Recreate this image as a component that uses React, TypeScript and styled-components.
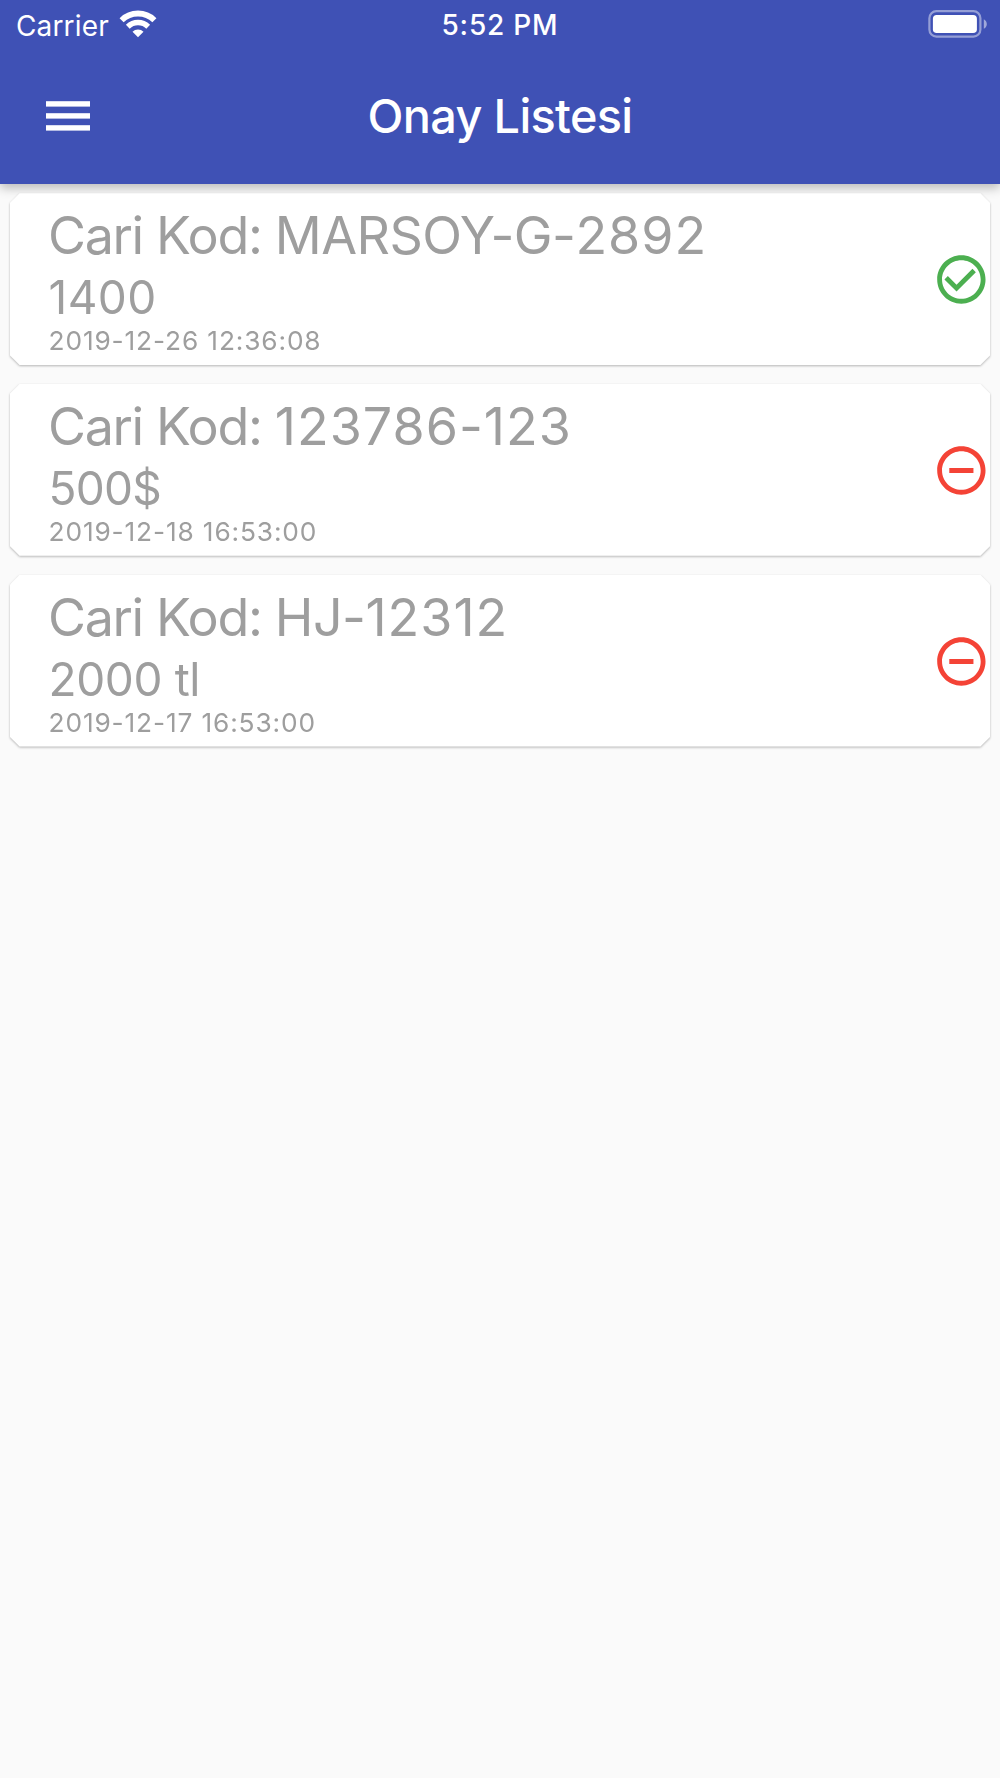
import React from 'react';
import styled, { createGlobalStyle } from 'styled-components';

const GlobalStyle = createGlobalStyle`
  *, *::before, *::after { box-sizing: border-box; }
  body {
    margin: 0;
    background: #fafafa;
    font-family: Inter, Roboto, 'Liberation Sans', sans-serif;
    -webkit-font-smoothing: antialiased;
  }
`;

const Screen = styled.div`
  width: 1000px;
  min-height: 1778px;
  background: #fafafa;
`;

const Header = styled.header`
  height: 183.7px;
  background: #3f51b5;
  color: #fff;
  box-shadow: 0 4px 10px rgba(0, 0, 0, 0.26);
`;

const StatusBar = styled.div`
  display: grid;
  grid-template-columns: 1fr auto 1fr;
  align-items: center;
  height: 50px;
  padding: 0 12px;
`;

const Network = styled.div`
  display: flex;
  align-items: center;
  gap: 10px;
  padding-left: 4px;

  svg {
    margin-bottom: 2px;
  }
`;

const Carrier = styled.span`
  padding-top: 1px;
  font-size: 28px;
  line-height: 32px;
  letter-spacing: 0.15px;
`;

const Clock = styled.span`
  font-size: 28px;
  font-weight: 500;
  line-height: 32px;
  letter-spacing: 0.8px;
  white-space: nowrap;
`;

const BatterySlot = styled.div`
  display: flex;
  justify-content: flex-end;
  padding-bottom: 2px;
`;

const Toolbar = styled.div`
  display: grid;
  grid-template-columns: 1fr auto 1fr;
  align-items: center;
  height: 132px;
  padding: 0 46px;
`;

const MenuButton = styled.button`
  display: flex;
  width: 44px;
  padding: 0;
  border: 0;
  background: none;
  color: inherit;
`;

const Title = styled.h1`
  margin: 0;
  font-size: 46.8px;
  font-weight: 500;
  line-height: 56px;
  letter-spacing: -0.65px;
  white-space: nowrap;
`;

const List = styled.main`
  display: flex;
  flex-direction: column;
  gap: 19px;
  padding: 9.5px 9.6px;
`;

const CardShadow = styled.div`
  filter: drop-shadow(0 1.5px 1.3px rgba(0, 0, 0, 0.28));
`;

const Card = styled.article`
  display: flex;
  justify-content: space-between;
  align-items: center;
  height: 171.8px;
  padding-left: 39px;
  background: #fff;
  color: #9e9e9e;
  clip-path: polygon(
    10px 0, calc(100% - 10px) 0, 100% 10px, 100% calc(100% - 10px),
    calc(100% - 10px) 100%, 10px 100%, 0 calc(100% - 10px), 0 10px
  );
`;

const Details = styled.div`
  display: flex;
  flex-direction: column;
  white-space: nowrap;
`;

const Code = styled.div`
  margin-left: -0.6px;
  font-size: 52px;
  line-height: 63px;
  letter-spacing: -1.35px;
`;

const Letters = styled.span`
  letter-spacing: -0.55px;
`;

const Digits = styled.span`
  letter-spacing: 1px;
`;

const Amount = styled.div<{ $tracking: number }>`
  font-size: 46px;
  line-height: 60px;
  letter-spacing: ${(p) => p.$tracking}px;
`;

const Stamp = styled.div`
  margin-top: 1px;
  font-size: 26.3px;
  line-height: 26px;
  letter-spacing: 0.85px;
`;

const StateIcon = styled.svg<{ $approved: boolean }>`
  width: 58px;
  height: 58px;
  flex: none;
  fill: ${(p) => (p.$approved ? '#4caf50' : '#f44336')};
`;

const RING =
  'M12 2C6.48 2 2 6.48 2 12s4.48 10 10 10 10-4.48 10-10S17.52 2 12 2zm0 18c-4.41 0-8-3.59-8-8s3.59-8 8-8 8 3.59 8 8-3.59 8-8 8z';
const CHECK = 'M16.59 7.58 10 14.17l-3.59-3.58L5 12l5 5 8-8z';
const MINUS = 'M7 11v2h10v-2z';

const WifiIcon = () => (
  <svg width="38" height="28" viewBox="0 0 38 28" fill="none" stroke="#fff">
    <path d="M2.6 10.2a23.4 23.4 0 0 1 32.8 0" strokeWidth="5.8" />
    <path d="M8.8 16.7a14.6 14.6 0 0 1 20.4 0" strokeWidth="5.4" />
    <path d="M13.5 21.7a7.8 7.8 0 0 1 11 0L19 27.2z" fill="#fff" stroke="none" />
  </svg>
);

const BatteryIcon = () => (
  <svg width="60" height="28" viewBox="0 0 60 28">
    <rect x="1.4" y="1.2" width="51" height="25.4" rx="7" fill="none" stroke="#fff" strokeOpacity="0.45" strokeWidth="2.2" />
    <rect x="4.9" y="4.9" width="44" height="18.2" rx="3.8" fill="#fff" />
    <path d="M55.8 9.2c4 2 4 7.6 0 9.6z" fill="#fff" fillOpacity="0.5" />
  </svg>
);

const MenuIcon = () => (
  <svg width="44" height="30" viewBox="0 0 44 30" fill="#fff">
    <rect y="0.2" width="44" height="5.4" />
    <rect y="12.2" width="44" height="5.4" />
    <rect y="24.2" width="44" height="5.4" />
  </svg>
);

const approvals = [
  { letters: 'MARSOY-G-', digits: '2892', amount: '1400', tracking: 0.4, date: '2019-12-26 12:36:08', approved: true },
  { letters: '', digits: '123786-123', amount: '500$', tracking: -0.8, date: '2019-12-18 16:53:00', approved: false },
  { letters: 'HJ-', digits: '12312', amount: '2000 tl', tracking: -0.4, date: '2019-12-17 16:53:00', approved: false },
];

export default function App() {
  return (
    <Screen>
      <GlobalStyle />
      <Header>
        <StatusBar>
          <Network>
            <Carrier>Carrier</Carrier>
            <WifiIcon />
          </Network>
          <Clock>5:52 PM</Clock>
          <BatterySlot>
            <BatteryIcon />
          </BatterySlot>
        </StatusBar>
        <Toolbar>
          <MenuButton aria-label="Menu">
            <MenuIcon />
          </MenuButton>
          <Title>Onay Listesi</Title>
        </Toolbar>
      </Header>
      <List>
        {approvals.map((item) => (
          <CardShadow key={item.date}>
            <Card>
              <Details>
                <Code>
                  Cari Kod: <Letters>{item.letters}</Letters>
                  <Digits>{item.digits}</Digits>
                </Code>
                <Amount $tracking={item.tracking}>{item.amount}</Amount>
                <Stamp>{item.date}</Stamp>
              </Details>
              <StateIcon viewBox="-0.15 -0.2 24 24" $approved={item.approved}>
                <path d={RING} />
                <path d={item.approved ? CHECK : MINUS} />
              </StateIcon>
            </Card>
          </CardShadow>
        ))}
      </List>
    </Screen>
  );
}
